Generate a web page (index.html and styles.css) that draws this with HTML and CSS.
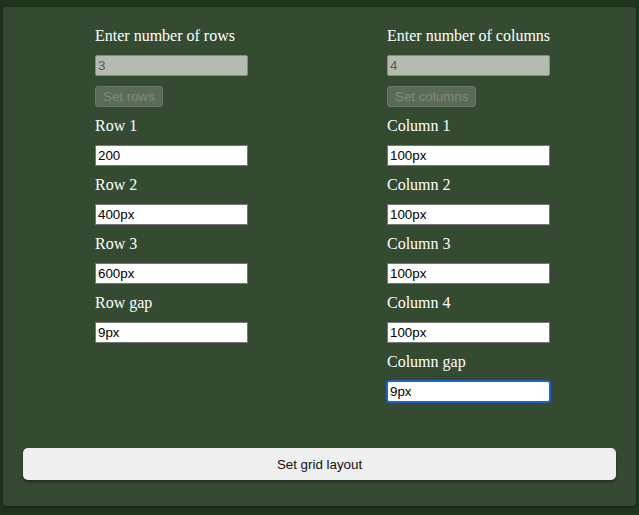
FILE: index.html
```html
<!DOCTYPE html>
<html>
<head>
<meta charset="utf-8">
<link rel="stylesheet" href="styles.css">
</head>
<body>
<div class="panel">
  <div class="cols">
    <div class="col col-rows">
      <label class="lbl">Enter number of rows</label>
      <input class="inp" type="text" value="3" disabled>
      <button class="small-btn" disabled>Set rows</button>
      <label class="lbl">Row 1</label>
      <input class="inp" type="text" value="200">
      <label class="lbl">Row 2</label>
      <input class="inp" type="text" value="400px">
      <label class="lbl">Row 3</label>
      <input class="inp" type="text" value="600px">
      <label class="lbl">Row gap</label>
      <input class="inp" type="text" value="9px">
    </div>
    <div class="col col-cols">
      <label class="lbl">Enter number of columns</label>
      <input class="inp" type="text" value="4" disabled>
      <button class="small-btn" disabled>Set columns</button>
      <label class="lbl">Column 1</label>
      <input class="inp" type="text" value="100px">
      <label class="lbl">Column 2</label>
      <input class="inp" type="text" value="100px">
      <label class="lbl">Column 3</label>
      <input class="inp" type="text" value="100px">
      <label class="lbl">Column 4</label>
      <input class="inp" type="text" value="100px">
      <label class="lbl">Column gap</label>
      <input class="inp focused" type="text" value="9px">
    </div>
  </div>
  <button class="big-btn">Set grid layout</button>
</div>
</body>
</html>
```
FILE: styles.css
```css
html, body {
  margin: 0;
  padding: 0;
  background: #1e351b;
}
body {
  padding: 7px 3px 9px 3px;
}
.panel {
  background: #344b31;
  border-radius: 4px;
  box-shadow: 0 1px 3px rgba(0,0,0,0.35);
  padding: 20px 20px 26px 20px;
  display: flex;
  flex-direction: column;
}
.cols {
  display: flex;
  padding-left: 72px;
  gap: 139px;
}
.col {
  display: flex;
  flex-direction: column;
  align-items: flex-start;
  gap: 10px;
}
.col-rows { width: 153px; }
.col-cols { width: 163px; }
.lbl {
  font-family: "Liberation Serif", "Times New Roman", serif;
  font-size: 16px;
  line-height: 18px;
  color: #ffffff;
  display: block;
  white-space: nowrap;
}
.inp {
  box-sizing: border-box;
  width: 100%;
  height: 21px;
  margin: 0;
  padding: 1px 2px;
  border: 1px solid #767676;
  background: #ffffff;
  color: #000;
  font-family: "Liberation Sans", Arial, sans-serif;
  font-size: 13.33px;
  outline: none;
}
.inp:disabled {
  background: #b4bcb2;
  color: #555a55;
  border-color: #868c85;
  border-radius: 2px;
}
.inp.focused {
  outline: 2px solid #1d62d3;
  outline-offset: -1px;
  border-radius: 2px;
}
.small-btn {
  box-sizing: border-box;
  height: 21px;
  margin: 0;
  padding: 0 7px;
  font-family: "Liberation Sans", Arial, sans-serif;
  font-size: 13.33px;
  background: #5a6b57;
  color: #7f8c7c;
  border: 1px solid #6a7867;
  border-radius: 3px;
}
.big-btn {
  margin-top: 46px;
  height: 32px;
  width: 100%;
  background: #efefef;
  border: none;
  border-radius: 5px;
  box-shadow: 0 2px 3px rgba(0,0,0,0.4);
  font-family: "Liberation Sans", Arial, sans-serif;
  font-size: 13.33px;
  color: #111;
}
```
